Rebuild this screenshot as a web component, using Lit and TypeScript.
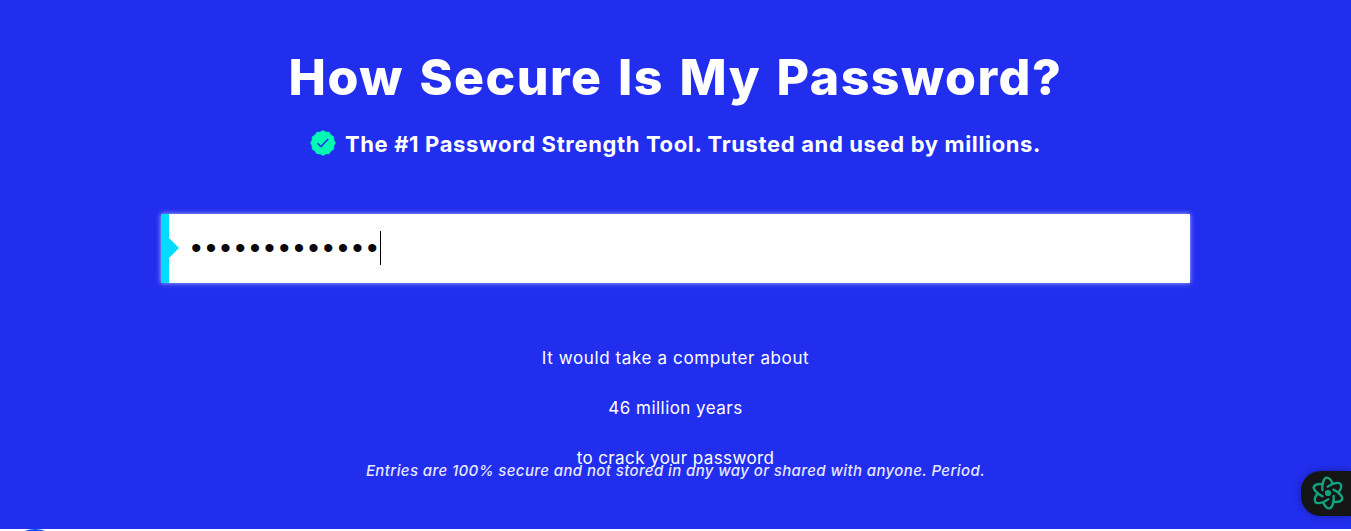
import { LitElement, html, css, svg } from "lit";
import { customElement, property } from "lit/decorators.js";

const points = 12;
const sealPath =
  Array.from({ length: points * 2 }, (_, i) => {
    const a = (Math.PI * i) / points - Math.PI / 2;
    const r = i % 2 ? 11.3 : 12.4;
    return `${i ? "L" : "M"}${(13 + r * Math.cos(a)).toFixed(2)} ${(13 + r * Math.sin(a)).toFixed(2)}`;
  }).join("") + "Z";

@customElement("password-field")
class PasswordField extends LitElement {
  @property({ type: Number }) length = 13;

  static styles = css`
    :host { display: block; }
    .field {
      display: flex;
      align-items: center;
      box-sizing: border-box;
      height: 69px;
      padding-bottom: 1px;
      background: #fff;
      border-left: 8px solid #00dcff;
      box-shadow: 0 0 5px rgba(255, 255, 255, 0.65);
    }
    .arrow {
      width: 0;
      height: 0;
      border: 10px solid transparent;
      border-left-color: #00dcff;
      border-right: 0;
    }
    .dots {
      margin: 0 -2px 0 12px;
      font: 30px/34px "Liberation Sans", Arial, sans-serif;
      letter-spacing: 4.16px;
      color: #080808;
      white-space: nowrap;
    }
    .caret { width: 1px; height: 34px; background: #000; }
  `;

  render() {
    return html`<div class="field">
      <div class="arrow"></div>
      <div class="dots">${"•".repeat(this.length)}</div>
      <div class="caret"></div>
    </div>`;
  }
}

@customElement("app-root")
class AppRoot extends LitElement {
  static styles = css`
    :host {
      display: block;
      position: relative;
      height: 531px;
      overflow: hidden;
      background: #fff;
      color: #fff;
      font-family: Inter, "Open Sans", sans-serif;
    }
    .hero {
      box-sizing: border-box;
      height: 529px;
      padding: 47px 161px 0;
      background: #212eee;
      text-align: center;
      white-space: nowrap;
    }
    h1 { margin: 0; font-size: 50px; line-height: 60px; font-weight: 800; letter-spacing: 1.5px; word-spacing: 3px; }
    .tagline {
      display: flex;
      justify-content: center;
      align-items: center;
      gap: 9px;
      margin: 22px 0 55px;
      height: 30px;
    }
    .tagline h2 { margin: 0; font-size: 22px; line-height: 30px; font-weight: 700; letter-spacing: 0.64px; }
    .seal { width: 26px; height: 26px; flex: none; position: relative; top: -1px; }
    .result { margin-top: 50px; font-size: 17px; line-height: 50px; }
    .result p { margin: 0; }
    .l1 { letter-spacing: 0.62px; }
    .l2 { letter-spacing: 0.46px; }
    .l3 { letter-spacing: 0.4px; }
    .note { margin: -22px 0 0; font-size: 15px; line-height: 20px; font-style: italic; font-weight: 500; letter-spacing: 0.39px; color: #e6e7fd; }
    .badge {
      position: absolute;
      right: 0;
      top: 471px;
      width: 50px;
      height: 45px;
      background: #151515;
      border-radius: 20px 0 0 20px;
      box-shadow: 0 0 9px rgba(0, 0, 0, 0.3);
    }
    .badge svg { position: absolute; left: 10px; top: 5px; width: 34px; height: 34px; }
    .bubble {
      position: absolute;
      left: 7px;
      top: 529px;
      width: 56px;
      height: 56px;
      border-radius: 50%;
      background: #0a50ff;
    }
  `;

  render() {
    return html`
      <main class="hero">
        <h1>How Secure Is My Password?</h1>
        <div class="tagline">
          <svg class="seal" viewBox="0 0 26 26">
            <path d=${sealPath} fill="#00f9b5" stroke="#00f9b5" stroke-width="0.6" stroke-linejoin="round" />
            <path d="M7.5 13.2L11 16.6L18.2 9" fill="none" stroke="#2536e8" stroke-width="1.6" />
          </svg>
          <h2>The #1 Password Strength Tool. Trusted and used by millions.</h2>
        </div>
        <password-field .length=${13}></password-field>
        <div class="result">
          <p class="l1">It would take a computer about</p>
          <p class="l2">46 million years</p>
          <p class="l3">to crack your password</p>
        </div>
        <p class="note">Entries are 100% secure and not stored in any way or shared with anyone. Period.</p>
      </main>
      <div class="badge">
        <svg viewBox="-17 -17 34 34" fill="none" stroke="#10a37f" stroke-width="2.4" stroke-linecap="round">
          ${[0, 60, 120, 180, 240, 300].map(
            (a) => svg`<path transform="rotate(${a})" d="M-5.6 -3C-6.2 -9 -4.2 -15.4 -1.3 -15.4C1.3 -15.4 3.4 -12.6 4.8 -9.4" />`
          )}
          <circle r="3.1" fill="#10a37f" stroke="none" />
        </svg>
      </div>
      <div class="bubble"></div>
    `;
  }
}
